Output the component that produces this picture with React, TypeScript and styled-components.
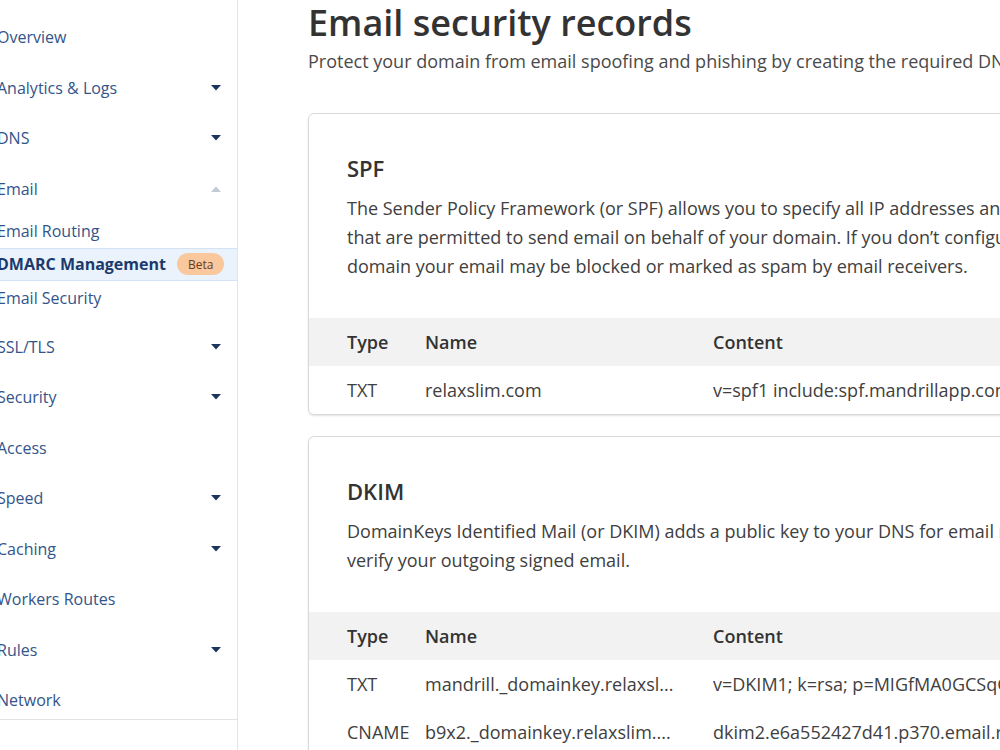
import React from 'react';
import styled, { createGlobalStyle } from 'styled-components';

const GlobalStyle = createGlobalStyle`
  html, body {
    margin: 0;
    padding: 0;
    background: #fff;
    overflow: hidden;
  }
  body {
    font-family: "Open Sans", "Noto Sans", "Liberation Sans", sans-serif;
    color: #333;
  }
`;

const navItems = [
  { label: 'Overview' },
  { label: 'Analytics & Logs', caret: 'down' },
  { label: 'DNS', caret: 'down' },
  {
    label: 'Email',
    caret: 'up',
    children: [
      { label: 'Email Routing' },
      { label: 'DMARC Management', active: true, badge: 'Beta' },
      { label: 'Email Security' },
    ],
  },
  { label: 'SSL/TLS', caret: 'down' },
  { label: 'Security', caret: 'down' },
  { label: 'Access' },
  { label: 'Speed', caret: 'down' },
  { label: 'Caching', caret: 'down' },
  { label: 'Workers Routes' },
  { label: 'Rules', caret: 'down' },
  { label: 'Network' },
];

const sections = [
  {
    title: 'SPF',
    lines: [
      'The Sender Policy Framework (or SPF) allows you to specify all IP addresses and domains',
      'that are permitted to send email on behalf of your domain. If you don\u2019t configure SPF for your',
      'domain your email may be blocked or marked as spam by email receivers.',
    ],
    rows: [
      { type: 'TXT', name: 'relaxslim.com', content: 'v=spf1 include:spf.mandrillapp.com ?all' },
    ],
  },
  {
    title: 'DKIM',
    lines: [
      'DomainKeys Identified Mail (or DKIM) adds a public key to your DNS for email receivers to',
      'verify your outgoing signed email.',
    ],
    rows: [
      {
        type: 'TXT',
        name: 'mandrill._domainkey.relaxsl...',
        content: 'v=DKIM1; k=rsa; p=MIGfMA0GCSqGSIb3DQEBAQUAA4GNADCBiQKBgQ',
      },
      {
        type: 'CNAME',
        name: 'b9x2._domainkey.relaxslim....',
        content: 'dkim2.e6a552427d41.p370.email.relaxslim.com',
      },
    ],
  },
];

const Caret = ({ dir }: { dir: string }) => (
  <CaretSvg viewBox="0 0 10 6" $up={dir === 'up'}>
    {dir === 'up' ? <path d="M0 6 L5 0.5 L10 6 Z" /> : <path d="M0 0 L10 0 L5 5.5 Z" />}
  </CaretSvg>
);

export default function App() {
  return (
    <>
      <GlobalStyle />
      <Page>
        <Sidebar>
          <NavList>
            {navItems.map((item) => (
              <React.Fragment key={item.label}>
                <NavItem>
                  <span>{item.label}</span>
                  {item.caret && <Caret dir={item.caret} />}
                </NavItem>
                {item.children && (
                  <SubList>
                    {item.children.map((child) => (
                      <SubItem key={child.label} $active={!!child.active}>
                        {child.label}
                        {child.badge && <Badge>{child.badge}</Badge>}
                      </SubItem>
                    ))}
                  </SubList>
                )}
              </React.Fragment>
            ))}
          </NavList>
        </Sidebar>
        <Main>
          <Title>Email security records</Title>
          <Subtitle>
            Protect your domain from email spoofing and phishing by creating the required DNS records.
          </Subtitle>
          {sections.map((section) => (
            <Card key={section.title}>
              <CardBody>
                <CardTitle>{section.title}</CardTitle>
                <Description>
                  {section.lines.map((line) => (
                    <span key={line}>{line}</span>
                  ))}
                </Description>
              </CardBody>
              <RecordTable>
                <colgroup>
                  <col style={{ width: 116 }} />
                  <col style={{ width: 288 }} />
                  <col />
                </colgroup>
                <thead>
                  <tr>
                    <Th>Type</Th>
                    <Th>Name</Th>
                    <Th>Content</Th>
                  </tr>
                </thead>
                <tbody>
                  {section.rows.map((row) => (
                    <tr key={row.name}>
                      <Td>{row.type}</Td>
                      <Td>{row.name}</Td>
                      <Td>{row.content}</Td>
                    </tr>
                  ))}
                </tbody>
              </RecordTable>
            </Card>
          ))}
        </Main>
      </Page>
    </>
  );
}

const Page = styled.div`
  display: flex;
  width: 1000px;
  height: 750px;
  overflow: hidden;
`;

const Sidebar = styled.aside`
  flex: 0 0 241px;
  margin-left: -3px;
  border-right: 1px solid #e4e4e4;
  box-sizing: border-box;
`;

const NavList = styled.nav`
  display: flex;
  flex-direction: column;
  padding-top: 5px;
  border-bottom: 1px solid #e2e2e2;
`;

const NavItem = styled.div`
  display: flex;
  align-items: center;
  justify-content: space-between;
  height: 50.5px;
  padding: 21px 16px 7.5px 0;
  box-sizing: border-box;
  font-size: 16px;
  line-height: 22px;
  color: #33548a;
`;

const CaretSvg = styled.svg<{ $up: boolean }>`
  width: 10px;
  height: 6px;
  fill: ${(p) => (p.$up ? '#c2cad6' : '#1c3560')};
`;

const SubList = styled.div`
  display: flex;
  flex-direction: column;
  padding-top: 7px;
`;

const SubItem = styled.div<{ $active: boolean }>`
  display: flex;
  align-items: center;
  gap: 11px;
  height: 33.5px;
  box-sizing: border-box;
  font-size: 16px;
  color: ${(p) => (p.$active ? '#1b3a6d' : '#33548a')};
  font-weight: ${(p) => (p.$active ? 700 : 400)};
  background: ${(p) => (p.$active ? '#eaf2fc' : 'transparent')};
  border-top: 1px solid ${(p) => (p.$active ? '#d3e2f5' : 'transparent')};
  border-bottom: 1px solid ${(p) => (p.$active ? '#d3e2f5' : 'transparent')};
`;

const Badge = styled.span`
  display: inline-flex;
  align-items: center;
  height: 22px;
  padding: 0 11px;
  border-radius: 11px;
  background: #f9c89c;
  color: #6a3b1e;
  font-size: 12px;
  font-weight: 400;
`;

const Main = styled.main`
  flex: 1;
  min-width: 0;
  padding: 0 0 0 70px;
  overflow: hidden;
`;

const Title = styled.h1`
  margin: 0;
  padding-top: 1px;
  font-size: 36px;
  line-height: 44px;
  font-weight: 600;
  color: #333;
  white-space: nowrap;
`;

const Subtitle = styled.p`
  margin: 2px 0 0;
  font-size: 18px;
  line-height: 28px;
  color: #4a4a4a;
  white-space: nowrap;
`;

const Card = styled.section`
  width: 900px;
  margin-top: 38px;
  border: 1px solid #d9d9d9;
  border-radius: 6px;
  box-shadow: 0 1px 2px rgba(0, 0, 0, 0.12);
  overflow: hidden;

  & + & {
    margin-top: 21px;
  }
`;

const CardBody = styled.div`
  padding: 40px 38px 37px;
`;

const CardTitle = styled.h2`
  margin: 0 0 12px;
  font-size: 22px;
  line-height: 28px;
  font-weight: 600;
  color: #333;
`;

const Description = styled.p`
  margin: 0;
  display: flex;
  flex-direction: column;
  font-size: 18px;
  line-height: 29px;
  color: #404040;
  white-space: nowrap;
`;

const RecordTable = styled.table`
  width: 100%;
  border-collapse: collapse;
  table-layout: fixed;
`;

const Th = styled.th`
  height: 48px;
  padding: 0;
  text-align: left;
  background: #f2f2f2;
  font-size: 18px;
  font-weight: 600;
  color: #333;
  white-space: nowrap;

  &:first-child {
    padding-left: 38px;
  }
`;

const Td = styled.td`
  height: 48px;
  padding: 0;
  font-size: 18px;
  color: #404040;
  white-space: nowrap;
  overflow: hidden;

  &:first-child {
    padding-left: 38px;
  }
`;
